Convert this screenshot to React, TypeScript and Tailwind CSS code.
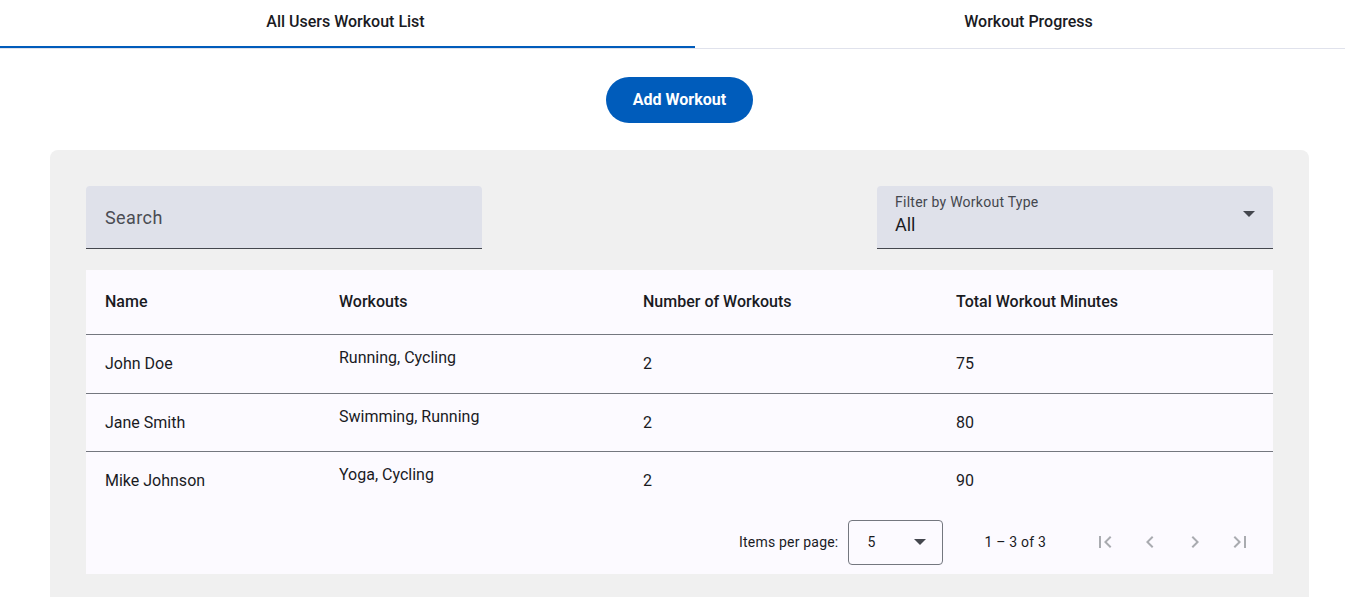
import React from "react";

const rows = [
  { name: "John Doe", workouts: "Running, Cycling", count: 2, minutes: 75, h: "h-[58px]" },
  { name: "Jane Smith", workouts: "Swimming, Running", count: 2, minutes: 80, h: "h-[57px]" },
  { name: "Mike Johnson", workouts: "Yoga, Cycling", count: 2, minutes: 90, h: "h-[58px]" },
];

function Icon({ d, className }: { d: string; className?: string }) {
  return (
    <svg viewBox="0 0 24 24" width="24" height="24" className={className} fill="currentColor">
      <path d={d} />
    </svg>
  );
}

function Triangle({ className }: { className?: string }) {
  return (
    <svg viewBox="0 0 12 6" width="12" height="6" className={className} fill="currentColor">
      <path d="M0 0h12L6 6z" />
    </svg>
  );
}

export default function App() {
  return (
    <div
      className="w-full h-[597px] overflow-hidden bg-white text-[#1a1b1f]"
      style={{ fontFamily: "Roboto, 'Liberation Sans', sans-serif" }}
    >
      <div className="w-[1359px]">
        {/* Tabs */}
        <div className="flex border-b border-[#e0e2ec]">
          <div className="w-[695px] h-[48px] flex items-center justify-center border-b-2 border-[#005cbb] pb-[2px] pr-[4px] text-[16px] font-medium">
            All Users Workout List
          </div>
          <div className="flex-1 h-[48px] flex items-center justify-center pb-[4px] pl-[3px] text-[16px] font-medium">
            Workout Progress
          </div>
        </div>

        {/* Add button */}
        <div className="flex justify-center pt-[28px]">
          <button className="w-[147px] h-[46px] rounded-full bg-[#005cbb] text-white text-[16px] font-bold">
            Add Workout
          </button>
        </div>

        {/* Panel */}
        <div className="mx-[50px] mt-[27px] rounded-lg bg-[#f0f0f0] px-[36px] pt-[36px] pb-[36px]">
          <div className="flex justify-between">
            <div className="w-[396px] h-[63px] rounded-t bg-[#dfe1ea] border-b border-[#44474e] flex items-center pl-[19px]">
              <span className="text-[18px] tracking-[0.4px] text-[#4a4c53]">Search</span>
            </div>
            <div className="w-[396px] h-[63px] rounded-t bg-[#dfe1ea] border-b border-[#44474e] flex items-center pl-[18px] pr-[18px]">
              <div className="flex-1 flex flex-col pb-[4px]">
                <span className="text-[14px] leading-[18px] tracking-[0.25px] text-[#44474e] -mt-[1px]">Filter by Workout Type</span>
                <span className="text-[18px] leading-[24px] mt-[2px] text-[#1a1b1f]">All</span>
              </div>
              <Triangle className="text-[#44474e] mb-[6px]" />
            </div>
          </div>

          {/* Table */}
          <div className="mt-[21px] bg-[#fcfaff]">
            <div className="grid grid-cols-[234px_304px_313px_1fr] h-[65px] border-b border-[#74777f] items-center text-[16px] font-medium">
              <div className="pl-[19px]">Name</div>
              <div className="pl-[19px]">Workouts</div>
              <div className="pl-[19px]">Number of Workouts</div>
              <div className="pl-[19px]">Total Workout Minutes</div>
            </div>
            {rows.map((r, i) => (
              <div
                key={r.name}
                className={`grid grid-cols-[234px_304px_313px_1fr] items-center text-[16px] ${r.h} ${
                  i < rows.length - 1 ? "border-b border-[#74777f] box-content" : ""
                }`}
              >
                <div className="pl-[19px]">{r.name}</div>
                <div className="pl-[19px] pb-[12px]">{r.workouts}</div>
                <div className="pl-[19px]">{r.count}</div>
                <div className="pl-[19px]">{r.minutes}</div>
              </div>
            ))}

            {/* Paginator */}
            <div className="h-[64px] flex items-center justify-end pr-[13px] text-[14px] tracking-[0.2px] text-[#1a1b1f]">
              <span>Items per page:</span>
              <div className="ml-[10px] w-[95px] h-[45px] rounded border border-[#74777f] flex items-center justify-between pl-[18px] pr-[16px]">
                <span>5</span>
                <Triangle className="text-[#44474e]" />
              </div>
              <span className="ml-[41px] text-[#1a1b1f]">1 – 3 of 3</span>
              <div className="ml-[39px] flex gap-[5px] text-[#a9abb0]">
                <div className="w-[40px] h-[40px] flex items-center justify-center">
                  <Icon d="M18.41 16.59L13.82 12l4.59-4.59L17 6l-6 6 6 6zM6 6h2v12H6z" />
                </div>
                <div className="w-[40px] h-[40px] flex items-center justify-center">
                  <Icon d="M15.41 7.41L14 6l-6 6 6 6 1.41-1.41L10.83 12z" />
                </div>
                <div className="w-[40px] h-[40px] flex items-center justify-center">
                  <Icon d="M10 6L8.59 7.41 13.17 12l-4.58 4.59L10 18l6-6z" />
                </div>
                <div className="w-[40px] h-[40px] flex items-center justify-center">
                  <Icon d="M5.59 7.41L10.18 12l-4.59 4.59L7 18l6-6-6-6zM16 6h2v12h-2z" />
                </div>
              </div>
            </div>
          </div>
        </div>
      </div>
    </div>
  );
}
